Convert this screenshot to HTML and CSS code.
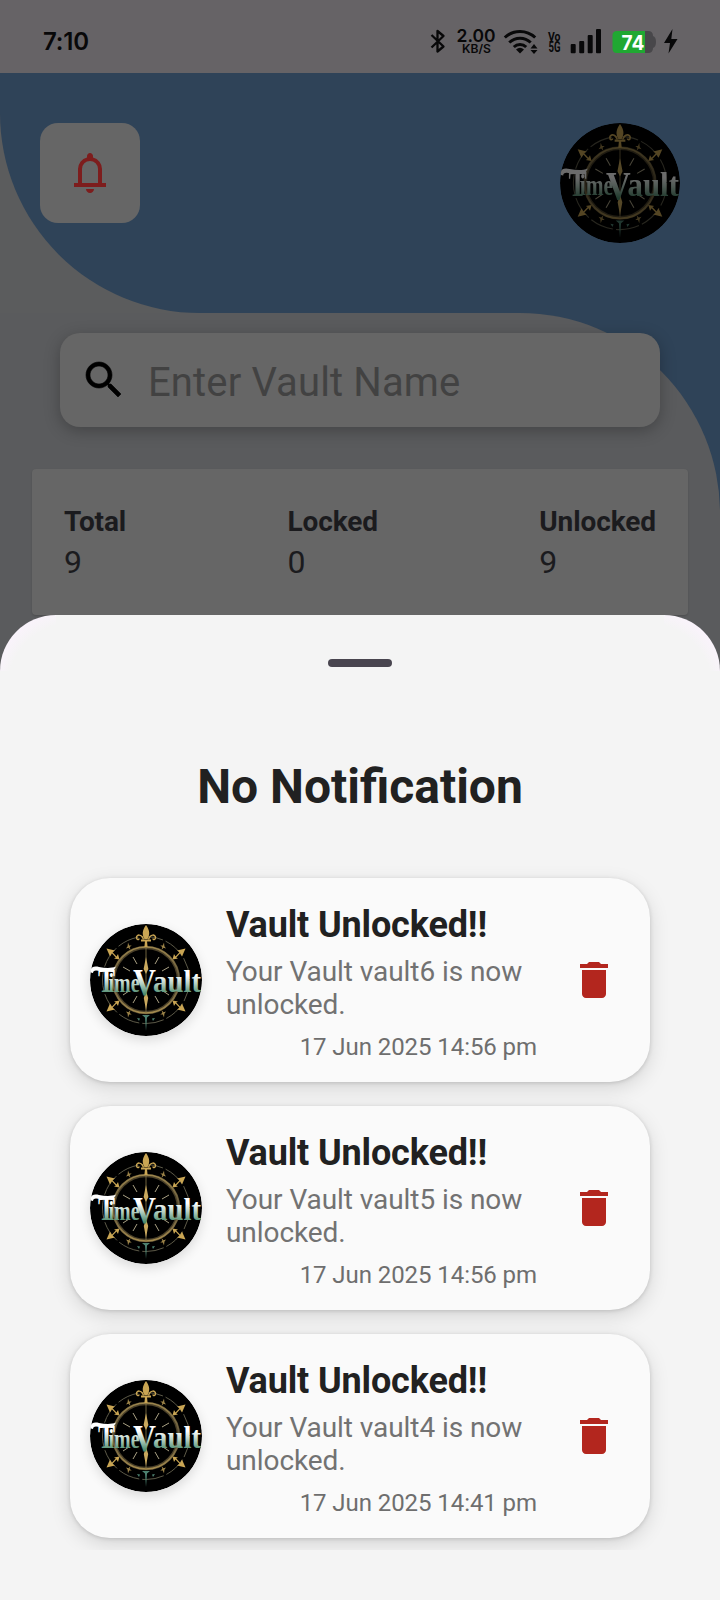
FILE: index.html
```html
<!DOCTYPE html>
<html lang="en">
<head>
<meta charset="utf-8">
<title>TimeVault</title>
<link rel="stylesheet" href="styles.css">
</head>
<body>
<svg class="sprite" width="0" height="0" aria-hidden="true">
  <defs>
    <linearGradient id="letters" x1="0" y1="43" x2="0" y2="70" gradientUnits="userSpaceOnUse">
      <stop offset="0.3" stop-color="#ffffff"/><stop offset="0.6" stop-color="#b9d3c6"/><stop offset="1" stop-color="#4d8b6d"/>
    </linearGradient>
    <linearGradient id="gold" x1="0" y1="0" x2="0" y2="112" gradientUnits="userSpaceOnUse">
      <stop offset="0" stop-color="#c8a95a"/><stop offset="0.5" stop-color="#5f543a"/><stop offset="0.8" stop-color="#a58b4e"/><stop offset="1" stop-color="#35695b"/>
    </linearGradient>
    <symbol id="logo" viewBox="0 0 112 112">
      <circle cx="56" cy="56" r="56" fill="#000"/>
      <circle cx="56" cy="56" r="43.500" fill="none" stroke="#5d5a48" stroke-width="1" stroke-dasharray="22 3"/>
      <circle cx="56" cy="56" r="32.500" fill="none" stroke="#4a4029" stroke-width="3.400"/>
      <circle cx="56" cy="56" r="33" fill="none" stroke="url(#gold)" stroke-width="1.700"/>
      <path d="M43 33l4 7M69 33l-4 7M33 43l7 4M79 43l-7 4M43 79l4-7M69 79l-4-7M33 71l6-4M79 71l-6-4" stroke="#a9a184" stroke-width="1"/>
      <path d="M56 24v64" stroke="#8c7b4f" stroke-width="0.8"/>
      <path d="M56 33l2.400 12L56 50l-2.400-5zM56 86l2.200-12L56 67l-2.200 7z" fill="#c9a85d"/>
      <g fill="#c9a553">
        <path d="M56 1c4 6 4 9 1.600 14h-3.200c-2.400-5-2.400-8 1.600-14zM51 15.500h10v2H51zM55 17h2l.6 6h-3.200z"/>
        <path d="M53.500 15.500c-2-6-7-5-7-2 0 2.500 2.500 2.500 2.500 1M58.500 15.500c2-6 7-5 7-2 0 2.500-2.500 2.500-2.500 1" fill="none" stroke="#c9a553" stroke-width="1.500"/>
        <path id="arrow" d="M16.500 24.500l8.500 2-2.500 1.800 4 4.200 1.500-2.500 1.500 5.500-5.500-1 1.800-1-4-4.200-1.800 3.200z"/>
        <use href="#arrow" transform="matrix(-1 0 0 1 112 0)"/>
        <use href="#arrow" transform="matrix(1 0 0 -1 0 112)"/>
        <use href="#arrow" transform="matrix(-1 0 0 -1 112 112)"/>
        <g fill="#9c8348">
          <path id="tick" d="M38 18.500l1.200 3 2.500 0-2 1.500.8 3-2-2.200-2.500.7 1.600-2.200z"/>
          <use href="#tick" transform="matrix(-1 0 0 1 112 0)"/>
          <use href="#tick" transform="matrix(1 0 0 -1 0 112)"/>
          <use href="#tick" transform="matrix(-1 0 0 -1 112 112)"/>
        </g>
      </g>
      <path d="M52 91h8l-3 2.500L56 107l-1-13.500zM47 94l2 3 1-2.500zM65 94l-2 3-1-2.500z" fill="#4d8170"/>
      <g class="logo-letters" fill="url(#letters)">
        <text x="8" y="68" font-size="34" textLength="17" lengthAdjust="spacingAndGlyphs">T</text>
        <text x="18.500" y="67.500" font-size="28" textLength="31" lengthAdjust="spacingAndGlyphs">ime</text>
        <text x="63" y="68" font-size="31" textLength="48" lengthAdjust="spacingAndGlyphs">ault</text>
        <text x="43" y="71" font-size="37" textLength="23" lengthAdjust="spacingAndGlyphs">V</text>
      </g>
      <path d="M0 46.500c1-4 5-4.500 9-3.500 6 1 12 1.500 17-.5l-2 3.500c-6 2-13 1-18 .5-2 0-3 1-3 2.500-2 0-3-1-3-2.500z" fill="#fff"/>
    </symbol>
    <symbol id="trash" viewBox="0 0 24 24">
      <path d="M6 19c0 1.100.9 2 2 2h8c1.100 0 2-.9 2-2V7H6v12zM19 4h-3.500l-1-1h-5l-1 1H5v2h14V4z"/>
    </symbol>
  </defs>
</svg>

<div class="screen">
  <div class="status-bar">
    <span class="clock">7:10</span>
    <svg class="status-icons" width="256" height="36" viewBox="426 22 256 36">
      <path d="M431.500 35l12 11.500-6 5V31l6 5-12 11.500" fill="none" stroke="#080809" stroke-width="2.300" stroke-linejoin="round"/>
      <g class="status-text" fill="#080809">
        <text x="456.500" y="42" font-size="17.500" textLength="39" lengthAdjust="spacingAndGlyphs">2.00</text>
        <text x="462" y="53" font-size="11.500" textLength="29" lengthAdjust="spacingAndGlyphs">KB/S</text>
      </g>
      <g fill="none" stroke="#080809" stroke-width="3">
        <path d="M504.800 37.500a22 22 0 0 1 30.400 0"/>
        <path d="M509.300 42.500a15.500 15.500 0 0 1 21.400 0"/>
        <path d="M513.800 47a9 9 0 0 1 12.400 0"/>
      </g>
      <path d="M516 49.500q4-3.500 8 0l-4 4zM530.500 48.500l3.500-4.500 3.500 4.500zM530.500 50l3.500 4 3.500-4z" fill="#080809"/>
      <g class="status-narrow" fill="#080809">
        <text x="548" y="41" font-size="13.500" textLength="12.500" lengthAdjust="spacingAndGlyphs">Vo</text>
        <text x="548.500" y="52.300" font-size="14" textLength="12" lengthAdjust="spacingAndGlyphs">5G</text>
      </g>
      <g fill="#080809">
        <rect x="570.700" y="44" width="5" height="9.300" rx="1"/><rect x="579.200" y="41" width="5" height="12.300" rx="1"/>
        <rect x="587.700" y="35" width="5" height="18.300" rx="1"/><rect x="596" y="29" width="5" height="24.300" rx="1"/>
      </g>
      <path d="M640 31h8q5 0 5 5 3 1 3 6t-3 6q0 5-5 5h-8z" fill="#48474a"/>
      <path d="M617 31h28v22h-28q-4.500 0-4.500-4.500v-13q0-4.500 4.500-4.500z" fill="#20a832"/>
      <text class="battery-text" x="621.500" y="49.500" font-size="20" fill="#fff" textLength="23" lengthAdjust="spacingAndGlyphs">74</text>
      <path d="M672.500 29l-8.500 14h6l-1.500 10.500L677.500 39h-6.200z" fill="#080809"/>
    </svg>
  </div>

  <div class="header-back">
    <header class="header">
      <div class="bell-button">
        <svg width="48" height="48" viewBox="0 -960 960 960"><path d="M160-200v-80h80v-280q0-83 50-147.500T420-792v-28q0-25 17.500-42.500T480-880q25 0 42.500 17.500T540-820v28q80 20 130 84.500T720-560v280h80v80H160Zm320 120q-33 0-56.500-23.500T400-160h160q0 33-23.500 56.500T480-80ZM320-280h320v-280q0-66-47-113t-113-47q-66 0-113 47t-47 113v280Z"/></svg>
      </div>
      <svg class="profile" width="120" height="120"><use href="#logo"/></svg>
    </header>
  </div>

  <div class="content-back">
    <main class="content">
      <div class="search">
        <svg width="48" height="48" viewBox="0 0 24 24"><path stroke="#000" stroke-width="0.3" d="M15.500 14h-.79l-.28-.27C15.410 12.590 16 11.110 16 9.500 16 5.910 13.090 3 9.500 3S3 5.910 3 9.500 5.910 16 9.500 16c1.610 0 3.090-.59 4.230-1.570l.27.28v.79l5 4.990L20.490 19l-4.990-5zm-6 0C7.010 14 5 11.990 5 9.500S7.010 5 9.500 5 14 7.010 14 9.500 11.990 14 9.500 14z"/></svg>
        <span class="placeholder">Enter Vault Name</span>
      </div>
      <div class="stats">
        <div class="stat"><b>Total</b><span>9</span></div>
        <div class="stat"><b>Locked</b><span>0</span></div>
        <div class="stat"><b>Unlocked</b><span>9</span></div>
      </div>
    </main>
  </div>

  <section class="sheet">
    <div class="handle"></div>
    <h1 class="sheet-title">No Notification</h1>
    <div class="list">
      <article class="card">
        <svg class="avatar" width="112" height="112"><use href="#logo"/></svg>
        <div class="card-body">
          <h2>Vault Unlocked!!</h2>
          <p>Your Vault vault6 is now unlocked.</p>
          <time>17 Jun 2025 14:56 pm</time>
        </div>
        <svg class="delete" width="48" height="48"><use href="#trash"/></svg>
      </article>
      <article class="card">
        <svg class="avatar" width="112" height="112"><use href="#logo"/></svg>
        <div class="card-body">
          <h2>Vault Unlocked!!</h2>
          <p>Your Vault vault5 is now unlocked.</p>
          <time>17 Jun 2025 14:56 pm</time>
        </div>
        <svg class="delete" width="48" height="48"><use href="#trash"/></svg>
      </article>
      <article class="card">
        <svg class="avatar" width="112" height="112"><use href="#logo"/></svg>
        <div class="card-body">
          <h2>Vault Unlocked!!</h2>
          <p>Your Vault vault4 is now unlocked.</p>
          <time>17 Jun 2025 14:41 pm</time>
        </div>
        <svg class="delete" width="48" height="48"><use href="#trash"/></svg>
      </article>
    </div>
  </section>
</div>
</body>
</html>
```

FILE: styles.css
```css
* { box-sizing: border-box; }
body { margin: 0; font-family: Roboto, "Liberation Sans", sans-serif; }
h1, h2, p { margin: 0; }
svg { display: block; flex: none; }
.sprite { position: absolute; }
.logo-letters { font-family: "Liberation Serif", serif; font-weight: 700; }

.screen {
  position: relative;
  display: flex;
  flex-direction: column;
  width: 720px;
  height: 1600px;
  overflow: hidden;
  background: #5a5b5d;
}

.status-bar {
  display: flex;
  justify-content: space-between;
  align-items: center;
  height: 73px;
  padding: 7px 38px 0 43px;
  background: #666366;
}
.clock { padding-top: 3px; font: 600 24px/32px Inter, sans-serif; letter-spacing: -0.2px; color: #080809; }
.status-text { font-family: Inter, sans-serif; font-weight: 600; }
.status-narrow { font-family: Roboto, sans-serif; font-weight: 700; }
.battery-text { font-family: Inter, sans-serif; font-weight: 700; }

.header-back { background: #5b5c5d; }
.header {
  display: flex;
  justify-content: space-between;
  align-items: flex-start;
  height: 240px;
  padding: 50px 40px 0;
  background: #2f4358;
  border-bottom-left-radius: 200px;
}
.bell-button {
  display: flex;
  align-items: center;
  justify-content: center;
  width: 100px;
  height: 100px;
  border-radius: 18px;
  background: #666;
  fill: #7d1d1d;
}
.profile { border-radius: 50%; filter: brightness(0.42); }

.content-back { flex: 1; background: #2f4358; }
.content {
  height: 100%;
  padding: 20px 32px 0;
  border-top-right-radius: 200px;
  background: #5a5b5d;
}
.search {
  display: flex;
  align-items: center;
  gap: 20px;
  height: 94px;
  margin: 0 28px;
  padding: 0 20px;
  border-radius: 20px;
  background: #666;
  box-shadow: 0 4px 16px rgba(0, 0, 0, 0.26);
}
.placeholder { font-size: 40px; line-height: 48px; letter-spacing: 0.13px; padding-top: 6px; color: #424242; }
.stats {
  display: flex;
  justify-content: space-between;
  height: 146px;
  margin-top: 42px;
  padding: 36px 32px 0;
  border-radius: 4px;
  background: #666;
  box-shadow: 0 1px 2px rgba(0, 0, 0, 0.15);
  color: #1b1b1e;
}
.stat { display: flex; flex-direction: column; }
.stat b { font-size: 28px; line-height: 33px; letter-spacing: -0.1px; }
.stat span { font-size: 32px; line-height: 38px; padding-top: 5px; height: 43px; }

.sheet {
  position: absolute;
  inset: 615px 0 0 0;
  display: flex;
  flex-direction: column;
  align-items: center;
  padding-top: 44px;
  border-radius: 56px 56px 0 0;
  background:
    radial-gradient(circle at 74px 74px, transparent 66px, #fbf3fd 84px) 0 0 / 56px 56px no-repeat,
    radial-gradient(circle at -18px 74px, transparent 66px, #fbf3fd 84px) 100% 0 / 56px 56px no-repeat,
    #f4f4f4;
}
.handle { width: 64px; height: 8px; border-radius: 4px; background: #49454f; }
.sheet-title { margin-top: 92px; font-size: 48px; line-height: 56px; font-weight: 700; color: #212121; }
.list {
  display: flex;
  flex-direction: column;
  gap: 24px;
  width: 720px;
  height: 716px;
  margin-top: 19px;
  padding: 44px 70px 0;
  overflow: hidden;
}
.card {
  display: flex;
  align-items: center;
  flex: none;
  height: 204px;
  padding: 0 20px;
  border-radius: 40px;
  background: #fafafa;
  box-shadow: 0 6px 20px rgba(0, 0, 0, 0.13), 0 1px 4px rgba(0, 0, 0, 0.15);
}
.avatar { border-radius: 50%; box-shadow: 0 4px 12px rgba(0, 0, 0, 0.13); }
.card-body { display: flex; flex-direction: column; width: 312px; margin-left: 24px; padding-top: 5px; }
.card h2 { font-size: 36px; line-height: 42px; font-weight: 700; letter-spacing: -0.15px; color: #212121; }
.card p { margin-top: 10px; font-size: 28px; line-height: 32.5px; letter-spacing: -0.07px; color: #727272; }
.card time { align-self: flex-end; margin-top: 12px; margin-right: 1px; font-size: 24px; line-height: 28px; letter-spacing: -0.07px; color: #6e6e6e; }
.delete { margin-left: 32px; fill: #b3261e; }
```
